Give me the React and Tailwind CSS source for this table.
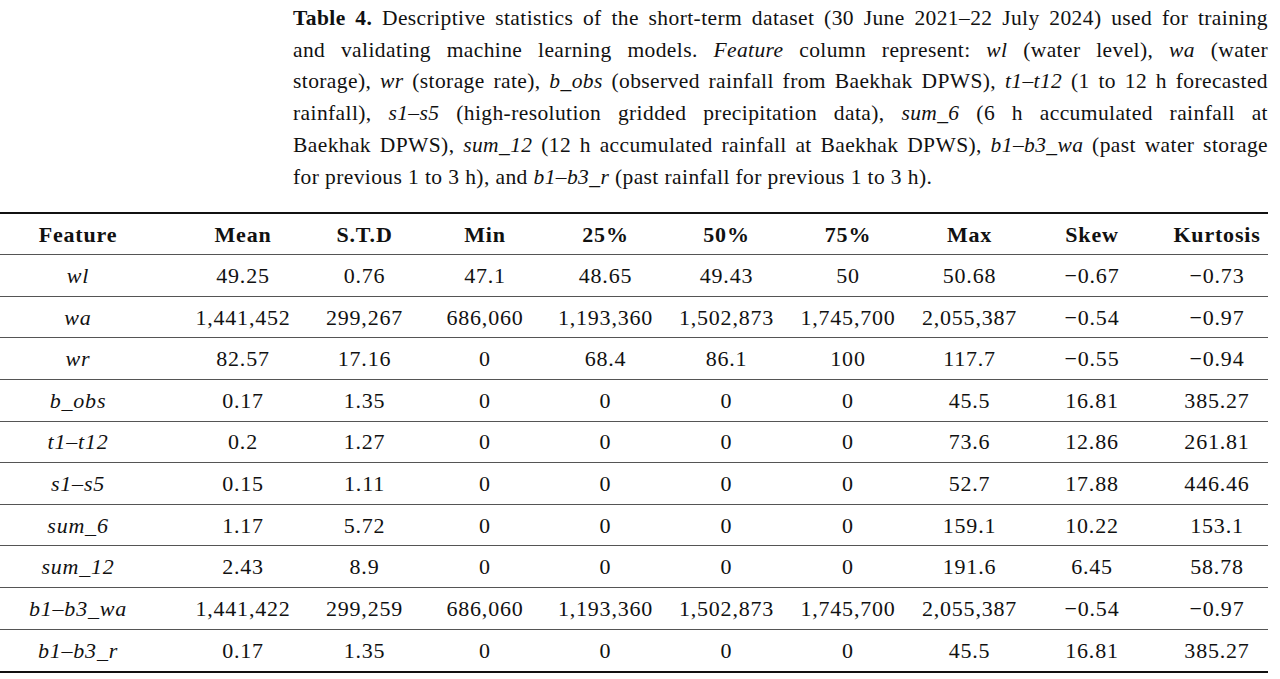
import React from "react";

const rows = [
  ["wl", "49.25", "0.76", "47.1", "48.65", "49.43", "50", "50.68", "\u22120.67", "\u22120.73"],
  ["wa", "1,441,452", "299,267", "686,060", "1,193,360", "1,502,873", "1,745,700", "2,055,387", "\u22120.54", "\u22120.97"],
  ["wr", "82.57", "17.16", "0", "68.4", "86.1", "100", "117.7", "\u22120.55", "\u22120.94"],
  ["b_obs", "0.17", "1.35", "0", "0", "0", "0", "45.5", "16.81", "385.27"],
  ["t1\u2013t12", "0.2", "1.27", "0", "0", "0", "0", "73.6", "12.86", "261.81"],
  ["s1\u2013s5", "0.15", "1.11", "0", "0", "0", "0", "52.7", "17.88", "446.46"],
  ["sum_6", "1.17", "5.72", "0", "0", "0", "0", "159.1", "10.22", "153.1"],
  ["sum_12", "2.43", "8.9", "0", "0", "0", "0", "191.6", "6.45", "58.78"],
  ["b1\u2013b3_wa", "1,441,422", "299,259", "686,060", "1,193,360", "1,502,873", "1,745,700", "2,055,387", "\u22120.54", "\u22120.97"],
  ["b1\u2013b3_r", "0.17", "1.35", "0", "0", "0", "0", "45.5", "16.81", "385.27"],
];

const headers = ["Feature", "Mean", "S.T.D", "Min", "25%", "50%", "75%", "Max", "Skew", "Kurtosis"];

const grid =
  "grid grid-cols-[182px_122px_121px_120px_121px_121px_122px_121px_124px_114px]";

// first and last columns get a bit of padding so their text sits where the print has it
const cellPad = (i) => (i === 0 ? "pr-[26px]" : i === 9 ? "pl-[12px]" : "");

const Line = ({ children, last }) => (
  <div className={last ? "text-left" : "text-justify [text-align-last:justify]"}>{children}</div>
);

export default function App() {
  return (
    <div className="w-[1280px] h-[679px] bg-white text-[#111] overflow-hidden font-['Liberation_Serif',serif]">
      <div className="ml-[293px] w-[975px] pt-[3px] text-[21.5px] leading-[31.7px] tracking-[0.4px]">
        <Line>
          <b>Table 4.</b> Descriptive statistics of the short-term dataset (30 June 2021–22 July 2024) used for training
        </Line>
        <Line>
          and validating machine learning models. <i>Feature</i> column represent: <i>wl</i> (water level), <i>wa</i> (water
        </Line>
        <Line>
          storage), <i>wr</i> (storage rate), <i>b_obs</i> (observed rainfall from Baekhak DPWS), <i>t1–t12</i> (1 to 12 h forecasted
        </Line>
        <Line>
          rainfall), <i>s1–s5</i> (high-resolution gridded precipitation data), <i>sum_6</i> (6 h accumulated rainfall at
        </Line>
        <Line>
          Baekhak DPWS), <i>sum_12</i> (12 h accumulated rainfall at Baekhak DPWS), <i>b1–b3_wa</i> (past water storage
        </Line>
        <Line last>
          for previous 1 to 3 h), and <i>b1–b3_r</i> (past rainfall for previous 1 to 3 h).
        </Line>
      </div>

      <div className="mt-[19px] w-[1268px] text-[22px] tracking-[0.8px] border-t-2 border-b-2 border-[#111]">
        <div className={`${grid} h-[41px] border-b border-[#555] font-bold`}>
          {headers.map((h, i) => (
            <div key={h} className={`flex items-center justify-center ${cellPad(i)}`}>
              {h}
            </div>
          ))}
        </div>
        {rows.map((r, ri) => (
          <div
            key={r[0]}
            className={`${grid} h-[41.6px] ${ri < rows.length - 1 ? "border-b border-[#555]" : ""}`}
          >
            {r.map((v, i) => (
              <div
                key={i}
                className={`flex items-center justify-center whitespace-nowrap ${cellPad(i)} ${i === 0 ? "italic" : ""}`}
              >
                {v}
              </div>
            ))}
          </div>
        ))}
      </div>
    </div>
  );
}
